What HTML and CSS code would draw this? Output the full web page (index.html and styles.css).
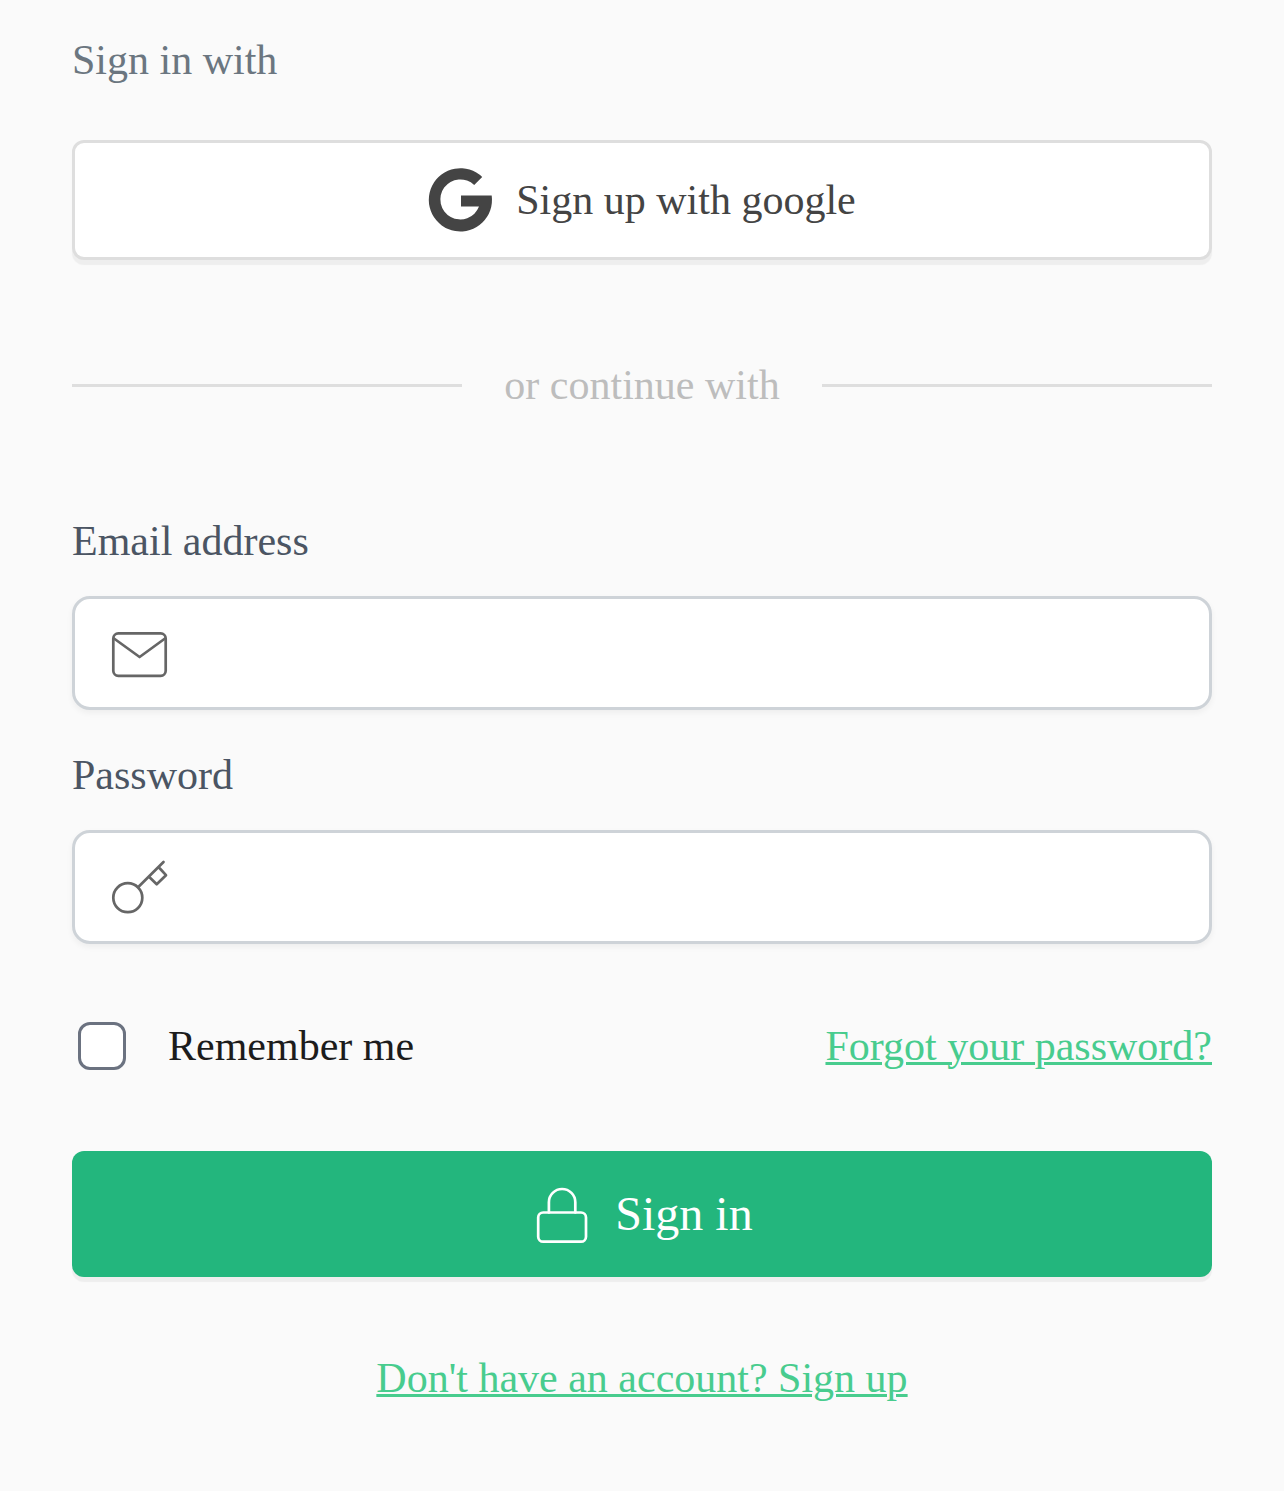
FILE: index.html
```
<!DOCTYPE html>
<html lang="en">
<head>
  <meta charset="utf-8" />
  <meta name="viewport" content="width=device-width, initial-scale=1" />
  <title>Sign in</title>
  <link rel="stylesheet" href="styles.css">
</head>
<body>
  <main class="container">
    <p class="intro">Sign in with</p>
    <button class="btn btn-google" type="button">
      <svg class="google-icon" viewBox="0 0 64 64" aria-hidden="true">
        <path d="M54.2 9 L46.2 17 A20 20 0 1 0 51 38.6 H33 V27.6 H63.7 A31.6 31.6 0 1 1 54.2 9 Z" fill="currentColor"/>
      </svg>
      Sign up with google
    </button>

    <div class="separator"><span>or continue with</span></div>

    <form>
      <label class="field-label" for="email">Email address</label>
      <div class="field">
        <svg class="icon" viewBox="0 0 60 60" aria-hidden="true">
          <rect x="3.3" y="10.4" width="52.4" height="42.4" rx="5"/>
          <path d="M4 15.5 L29.6 34 L55 15.5"/>
        </svg>
        <input type="email" id="email" name="email">
      </div>

      <label class="field-label" for="password">Password</label>
      <div class="field">
        <svg class="icon" viewBox="0 0 60 60" aria-hidden="true">
          <circle cx="17.8" cy="40.7" r="14.5"/>
          <path d="M28.3 30 L53.5 5 M48.5 10 L56 18.2 L46.7 27.2 L39 19.7"/>
        </svg>
        <input type="password" id="password" name="password">
      </div>

      <div class="options">
        <div class="remember">
          <input type="checkbox" id="remember" name="remember">
          <label for="remember">Remember me</label>
        </div>
        <a href="#">Forgot your password?</a>
      </div>

      <button class="btn btn-submit" type="submit">
        <svg class="icon" viewBox="0 0 60 60" aria-hidden="true">
          <rect x="7.2" y="28.5" width="47.8" height="29.2" rx="5"/>
          <path d="M17.9 28.5 V18.2 A13.2 13.2 0 0 1 44.3 18.2 V28.5"/>
        </svg>
        Sign in
      </button>
    </form>

    <p class="signup"><a href="#">Don't have an account? Sign up</a></p>
  </main>
</body>
</html>
```
FILE: styles.css
```
*{box-sizing:border-box}
body{font:42px/60px "Liberation Serif","Times New Roman",serif; background:#fafafa; margin:0; color:#1c1c1c}
.container{padding:30px 72px}
p{margin:0}
a{color:#48cc8e;text-decoration-thickness:3px}
.intro{color:#6b7680;margin-bottom:50px}

.btn{display:flex;align-items:center;justify-content:center;gap:24px;width:100%;border:0;border-radius:12px;font:inherit;cursor:pointer;box-shadow:0 5px 1px #eee}
.btn-google{height:120px;background:#fff;color:#444;border:3px solid #dedede}
.google-icon{width:64px;height:64px;overflow:visible}
.btn-submit{height:126px;background:#23b67d;color:#fff;font-size:48px}

.separator{display:flex;align-items:center;gap:42px;margin:95px 0 96px;color:#bdbdbd}
.separator::before,.separator::after{content:"";flex:1;height:3px;background:#dedede}

.icon{flex:none;width:60px;height:60px;fill:none;stroke:currentColor;stroke-width:2.7;stroke-linecap:round;stroke-linejoin:round}
.field-label{display:block;color:#4b5563;margin-bottom:25px}
.field{display:flex;align-items:center;height:114px;margin-bottom:35px;padding:0 35px;background:#fff;color:#666;border:3px solid #ced3d8;border-radius:18px;box-shadow:0 3px 6px rgba(0,0,0,.05)}
.field input{flex:1;min-width:0;height:100%;padding:0 24px;border:0;outline:0;background:none;font:inherit;color:#1c1c1c}

.options{display:flex;align-items:center;justify-content:space-between;margin:72px 0 75px}
.remember{display:flex;align-items:center;gap:42px}
.remember input{appearance:none;width:48px;height:48px;margin:0 0 0 6px;background:#fff;border:3px solid #6b7280;border-radius:12px}
.remember input:checked{background:#23b67d}

.signup{margin-top:71px;text-align:center}
```
